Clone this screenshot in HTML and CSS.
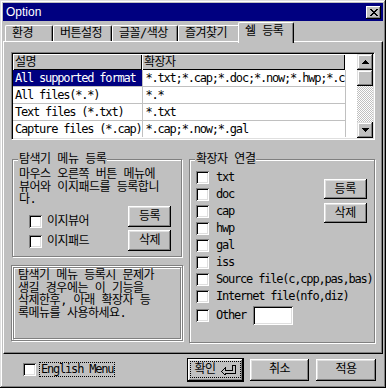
FILE: index.html
```html
<!DOCTYPE html>
<html lang="ko">
<head>
    <meta charset="UTF-8">
    <meta name="viewport" content="width=device-width, initial-scale=1.0">
    <title>Option</title>
    <link rel="stylesheet" href="styles.css">
</head>
<body>
    <div class="window">
        <div class="titlebar">
            <span class="title">Option</span>
            <span class="close">
                <svg width="8" height="7" viewBox="0 0 8 7" shape-rendering="crispEdges"><path d="M0 0h2v1H0zM6 0h2v1H6zM1 1h2v1H1zM5 1h2v1H5zM2 2h4v1H2zM3 3h2v1H3zM2 4h4v1H2zM1 5h2v1H1zM5 5h2v1H5zM0 6h2v1H0zM6 6h2v1H6z"/></svg>
            </span>
        </div>

        <div class="tabs">
            <div class="tab t1">환경</div>
            <div class="tab t2">버튼설정</div>
            <div class="tab t3">글꼴/색상</div>
            <div class="tab t4">즐겨찾기</div>
            <div class="tab active">쉘 등록</div>
        </div>

        <div class="panel">
            <div class="list">
                <div class="grid">
                    <table class="files">
                        <colgroup><col class="c1"><col class="c2"></colgroup>
                        <tr><th>설명</th><th>확장자</th></tr>
                        <tr><td class="sel">All supported format</td><td>*.txt;*.cap;*.doc;*.now;*.hwp;*.c</td></tr>
                        <tr><td>All files(*.*)</td><td>*.*</td></tr>
                        <tr><td>Text files (*.txt)</td><td>*.txt</td></tr>
                        <tr><td>Capture files (*.cap)</td><td>*.cap;*.now;*.gal</td></tr>
                    </table>
                </div>
                <div class="scrollbar">
                    <span class="sb-btn"><svg width="7" height="4" viewBox="0 0 7 4" shape-rendering="crispEdges"><path d="M3 0h1v1H3zM2 1h3v1H2zM1 2h5v1H1zM0 3h7v1H0z"/></svg></span>
                    <span class="sb-thumb"></span>
                    <span class="sb-track"></span>
                    <span class="sb-btn"><svg width="7" height="4" viewBox="0 0 7 4" shape-rendering="crispEdges"><path d="M0 0h7v1H0zM1 1h5v1H1zM2 2h3v1H2zM3 3h1v1H3z"/></svg></span>
                </div>
            </div>

            <div class="lower">
                <div class="left-col">
                    <div class="group explorer">
                        <span class="group-title">탐색기 메뉴 등록</span>
                        <p class="desc">마우스 오른쪽 버튼 메뉴에<br>뷰어와 이지패드를 등록합니<br>다.</p>
                        <div class="explorer-body">
                            <div class="checks">
                                <label class="check-item"><span class="check"></span>이지뷰어</label>
                                <label class="check-item"><span class="check"></span>이지패드</label>
                            </div>
                            <div class="buttons">
                                <span class="btn small">등록</span>
                                <span class="btn small">삭제</span>
                            </div>
                        </div>
                    </div>
                    <div class="note">
                        <div class="note-inner">탐색기 메뉴 등록시 문제가<br>생길 경우에는 이 기능을<br>삭제한후, 아래 확장자 등<br>록메뉴를 사용하세요.</div>
                    </div>
                </div>

                <div class="group assoc">
                    <span class="group-title">확장자 연결</span>
                    <div class="assoc-body">
                        <div class="ext-list">
                            <label class="ext"><span class="check"></span><span class="en">txt</span></label>
                            <label class="ext"><span class="check"></span><span class="en">doc</span></label>
                            <label class="ext"><span class="check"></span><span class="en">cap</span></label>
                            <label class="ext"><span class="check"></span><span class="en">hwp</span></label>
                            <label class="ext"><span class="check"></span><span class="en">gal</span></label>
                            <label class="ext"><span class="check"></span><span class="en">iss</span></label>
                            <label class="ext"><span class="check"></span><span class="en">Source file(c,cpp,pas,bas)</span></label>
                            <label class="ext"><span class="check"></span><span class="en">Internet file(nfo,diz)</span></label>
                            <label class="ext other"><span class="check"></span><span class="en">Other</span><span class="textbox"></span></label>
                        </div>
                        <div class="buttons">
                            <span class="btn small">등록</span>
                            <span class="btn small">삭제</span>
                        </div>
                    </div>
                </div>
            </div>
        </div>

        <div class="footer">
            <label class="english"><span class="check"></span><span class="focus en">English Menu</span></label>
            <div class="actions">
                <span class="btn default">
                    <span class="focus">확인
                        <svg width="16" height="10" viewBox="0 0 16 10" shape-rendering="crispEdges"><path d="M0.5 6.5L4.5 2.5V5.5H11.5V0.5H14.5V8.5H4.5V10.5Z" fill="none" stroke="#000"/></svg>
                    </span>
                </span>
                <span class="btn cancel">취소</span>
                <span class="btn apply">적용</span>
            </div>
        </div>
    </div>
</body>
</html>
```

FILE: styles.css
```css
body {
    margin: 0;
    background-color: #c0c0c0;
}
.window {
    width: 386px;
    height: 388px;
    box-sizing: border-box;
    padding: 3px;
    display: flex;
    flex-direction: column;
    background-color: #c0c0c0;
    box-shadow: inset -1px -1px #000, inset 1px 1px #dfdfdf, inset -2px -2px #808080, inset 2px 2px #fff;
    font: 12px/13px "DejaVu Sans Mono", "Noto Sans CJK KR", monospace;
    letter-spacing: -0.5px;
    color: #000;
}
.en {
    letter-spacing: -1.2px;
}

/* Title bar */
.titlebar {
    height: 18px;
    flex: none;
    display: flex;
    align-items: center;
    justify-content: space-between;
    padding: 0 2px 0 3px;
    background-color: #000080;
    color: #fff;
}
.title {
    font-family: "Liberation Sans", Arial, sans-serif;
    font-size: 12px;
    letter-spacing: 0;
}
.close {
    width: 15px;
    height: 13px;
    display: flex;
    align-items: center;
    justify-content: center;
    background-color: #c0c0c0;
    box-shadow: inset -1px -1px #000, inset 1px 1px #fff, inset -2px -2px #808080;
}

/* Tabs */
.tabs {
    position: relative;
    z-index: 1;
    flex: none;
    display: flex;
    height: 19px;
    margin-top: 1px;
    padding-left: 2px;
}
.tab {
    box-sizing: border-box;
    height: 16px;
    margin-top: 3px;
    padding: 1px 0 0 6px;
    border-top: 1px solid #fff;
    border-left: 1px solid #fff;
    border-right: 1px solid #000;
    border-radius: 2px 2px 0 0;
    box-shadow: inset -1px 0 #808080;
    white-space: nowrap;
}
.t1 { width: 48px; }
.t2 { width: 59px; }
.t3 { width: 66px; }
.t4 { width: 62px; }
.tab.active {
    width: 56px;
    height: 21px;
    margin: 0 -2px;
    padding-top: 2px;
    background-color: #c0c0c0;
}

/* Tab page */
.panel {
    flex: none;
    height: 313px;
    box-sizing: border-box;
    padding: 10px 7px 0;
    border-top: 1px solid #fff;
    border-left: 1px solid #fff;
    border-right: 1px solid #000;
    border-bottom: 1px solid #000;
    box-shadow: inset -1px -1px #808080;
}

/* File type list */
.list {
    display: flex;
    height: 88px;
    box-sizing: border-box;
    padding: 1px;
    border: 1px solid;
    border-color: #808080 #fff #fff #808080;
    box-shadow: inset 1px 1px #000, inset -1px -1px #dfdfdf;
}
.grid {
    flex: 1;
    overflow: hidden;
    background-color: #fff;
}
.files {
    width: 332px;
    table-layout: fixed;
    border-collapse: collapse;
}
.files .c1 { width: 129px; }
.files .c2 { width: 203px; }
.files th {
    height: 16px;
    padding: 0 0 0 2px;
    text-align: left;
    font-weight: normal;
    background-color: #c0c0c0;
    box-shadow: inset 1px 1px #fff, inset -1px -1px #000;
}
.files td {
    height: 16px;
    padding: 0 0 0 2px;
    border-right: 1px solid #c0c0c0;
    border-bottom: 1px solid #c0c0c0;
    white-space: nowrap;
    overflow: hidden;
    letter-spacing: -1.2px;
}
.files td + td {
    padding-left: 3px;
}
.files tr:last-child td {
    border-bottom: none;
}
.files td.sel {
    background-color: #000080;
    color: #fff;
}
.scrollbar {
    width: 16px;
    display: flex;
    flex-direction: column;
}
.sb-btn,
.sb-thumb {
    height: 16px;
    flex: none;
    display: flex;
    align-items: center;
    justify-content: center;
    background-color: #c0c0c0;
    box-shadow: inset -1px -1px #000, inset 1px 1px #dfdfdf, inset -2px -2px #808080, inset 2px 2px #fff;
}
.sb-track {
    flex: 1;
    background: repeating-conic-gradient(#c0c0c0 0 25%, #fff 0 50%) 0 0 / 2px 2px;
}

/* Lower area */
.lower {
    display: flex;
    gap: 6px;
    margin-top: 19px;
}
.left-col {
    width: 172px;
    flex: none;
}
.group {
    position: relative;
    box-sizing: border-box;
    border: 1px solid #808080;
    box-shadow: inset 1px 1px #fff, 1px 1px #fff;
}
.group-title {
    position: absolute;
    top: -7px;
    left: 5px;
    padding: 0 1px;
    background-color: #c0c0c0;
    white-space: nowrap;
}
.explorer {
    height: 98px;
    margin: 0 1px;
    padding: 8px 6px 0;
}
.desc {
    margin: 0;
    line-height: 12.5px;
}
.explorer-body {
    display: flex;
    justify-content: space-between;
}
.checks {
    display: flex;
    flex-direction: column;
    margin: 6px 0 0 10px;
}
.check-item {
    display: flex;
    align-items: center;
    gap: 5px;
    height: 20px;
}
.check {
    width: 13px;
    height: 13px;
    flex: none;
    box-sizing: border-box;
    background-color: #fff;
    box-shadow: inset 1px 1px #808080, inset -1px -1px #fff, inset 2px 2px #000, inset -2px -2px #dfdfdf;
}
.buttons {
    display: flex;
    flex-direction: column;
    gap: 3px;
    margin-right: 4px;
}
.btn {
    display: flex;
    align-items: center;
    justify-content: center;
    box-sizing: border-box;
    height: 22px;
    background-color: #c0c0c0;
    box-shadow: inset -1px -1px #000, inset 1px 1px #fff, inset -2px -2px #808080, inset 2px 2px #dfdfdf;
}
.btn.small {
    width: 43px;
    height: 21px;
}
.note {
    height: 76px;
    margin-top: 8px;
    box-sizing: border-box;
    padding: 1px;
    border: 1px solid #808080;
    box-shadow: inset 1px 1px #fff, 1px 1px #fff;
}
.note-inner {
    height: 100%;
    box-sizing: border-box;
    padding: 1px 3px 0 4px;
    border: 1px solid #808080;
    box-shadow: inset 1px 1px #fff, 1px 1px #fff;
    line-height: 12.5px;
}

/* Extension association */
.assoc {
    width: 186px;
    height: 184px;
    padding: 9px 6px 0;
}
.assoc-body {
    display: grid;
}
.ext-list,
.assoc .buttons {
    grid-area: 1 / 1;
}
.ext-list {
    display: flex;
    flex-direction: column;
}
.ext {
    display: flex;
    align-items: center;
    gap: 7px;
    height: 17px;
    white-space: nowrap;
}
.ext.other {
    height: 21px;
}
.textbox {
    width: 40px;
    height: 19px;
    box-sizing: border-box;
    background-color: #fff;
    box-shadow: inset 1px 1px #808080, inset -1px -1px #fff, inset 2px 2px #000, inset -2px -2px #dfdfdf;
}
.assoc .buttons {
    justify-self: end;
    align-self: start;
    gap: 4px;
    margin: 10px 6px 0 0;
}
.assoc .btn.small {
    height: 20px;
}

/* Footer */
.footer {
    flex: 1;
    display: flex;
    align-items: center;
    padding: 0 7px 0 20px;
}
.english {
    display: flex;
    align-items: center;
    gap: 3px;
}
.focus {
    display: flex;
    align-items: center;
    gap: 5px;
    height: 15px;
    box-sizing: border-box;
    padding: 0 1px;
    border: 1px dotted #000;
}
.actions {
    display: flex;
    align-items: center;
    gap: 6px;
    margin-left: auto;
}
.btn.default {
    width: 57px;
    height: 24px;
    border: 1px solid #000;
}
.btn.default .focus {
    height: 17px;
    padding: 0 3px;
}
.btn.cancel {
    width: 59px;
}
.btn.apply {
    width: 60px;
    margin-left: 1px;
}
```
